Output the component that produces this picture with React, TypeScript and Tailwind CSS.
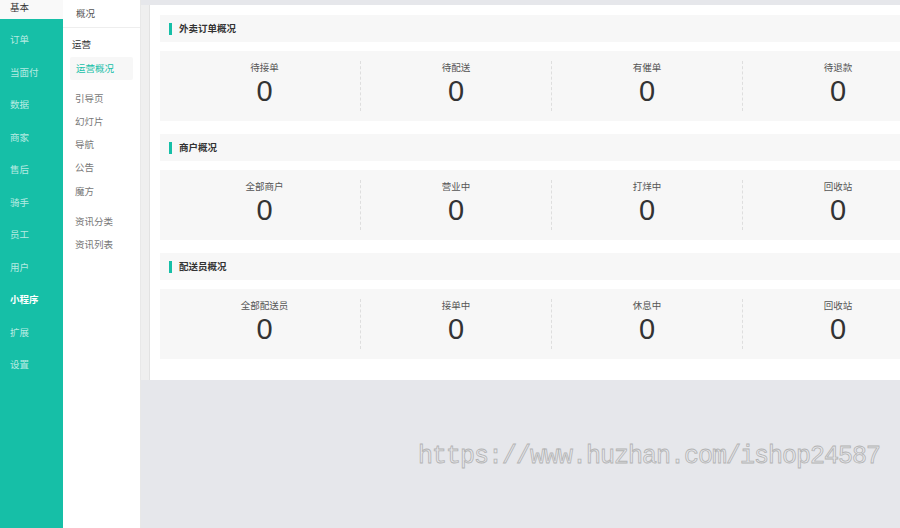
import React from 'react';

const mainMenu = ['订单', '当面付', '数据', '商家', '售后', '骑手', '员工', '用户', '小程序', '扩展', '设置'];
const subMenu = ['引导页', '幻灯片', '导航', '公告', '魔方'];

const sections = [
    { title: '外卖订单概况', stats: ['待接单', '待配送', '有催单', '待退款'] },
    { title: '商户概况', stats: ['全部商户', '营业中', '打烊中', '回收站'] },
    { title: '配送员概况', stats: ['全部配送员', '接单中', '休息中', '回收站'] },
];

const Section: React.FC<{ title: string; stats: string[] }> = ({ title, stats }) => (
    <div className="mb-[13px] last:mb-0">
        <div className="h-[27px] bg-[#f7f7f7] flex items-center pl-[9px]">
            <span className="w-[3px] h-[12px] bg-[#16bfa7] mr-[7px]" />
            <span className="text-[9.5px] font-bold text-[#333]">{title}</span>
        </div>
        <div className="mt-[9px] h-[70px] bg-[#f7f7f7] flex px-[9px]">
            {stats.map((label, i) => (
                <div key={label} className={`w-[191px] shrink-0 my-[10px] flex flex-col items-center ${i > 0 ? 'border-l border-dashed border-[#dedede]' : ''}`}>
                    <span className="text-[9.5px] text-[#555] leading-[12px]">{label}</span>
                    <span className="mt-[2px] text-[29px] text-[#333] leading-[32px] font-['Liberation_Sans',sans-serif]">0</span>
                </div>
            ))}
        </div>
    </div>
);

export default function App() {
    return (
        <div className="relative w-[900px] h-[528px] overflow-hidden flex font-['Noto_Sans_CJK_SC','Noto_Sans',sans-serif]">
            <div className="w-[63px] shrink-0 flex flex-col">
                <div className="h-[19px] bg-[#f9f9f9] text-[9.5px] text-[#333] pl-[10px] leading-[14px]">基本</div>
                <div className="flex-1 bg-[#16bfa7] pt-[4px]">
                    {mainMenu.map(item => (
                        <div key={item} className={`h-[32.5px] flex items-center pl-[10px] text-[9.5px] ${item === '小程序' ? 'text-white font-bold' : 'text-white/70'}`}>
                            {item}
                        </div>
                    ))}
                </div>
            </div>

            <div className="w-[78px] shrink-0 bg-white border-r border-[#e8e8e8]">
                <div className="h-[28px] border-b border-[#eeeeee] flex items-center pl-[13px] text-[9.5px] text-[#555]">概况</div>
                <div className="pl-[9px] pt-[9px] text-[9.5px] text-[#333] leading-[14px]">运营</div>
                <div className="mx-[7px] mt-[6px] h-[23px] bg-[#f7f7f7] rounded-[2px] flex items-center pl-[6px] text-[9.5px] text-[#16bfa7]">运营概况</div>
                <div className="mt-[6px]">
                    {subMenu.map(item => (
                        <div key={item} className="h-[23.3px] flex items-center pl-[12px] text-[9.5px] text-[#777]">{item}</div>
                    ))}
                </div>
                <div className="mt-[7px]">
                    {['资讯分类', '资讯列表'].map(item => (
                        <div key={item} className="h-[23.3px] flex items-center pl-[12px] text-[9.5px] text-[#777]">{item}</div>
                    ))}
                </div>
            </div>

            <div className="flex-1 bg-[#e6e7eb] pt-[5px]">
                <div className="flex">
                    <div className="w-[9px] shrink-0 bg-[#efefef] border-r border-[#e2e2e2]" />
                    <div className="w-[800px] shrink-0 bg-white pt-[10px] pl-[10px] pb-[21px]">
                        {sections.map(s => (
                            <Section key={s.title} title={s.title} stats={s.stats} />
                        ))}
                    </div>
                </div>
            </div>

            <div className="absolute left-[418px] top-[441px] text-[25px] tracking-[-1px] leading-[32px] whitespace-nowrap font-['Liberation_Mono',monospace] text-transparent [-webkit-text-stroke:0.8px_#b3b3b3]">
                https://www.huzhan.com/ishop24587
            </div>
        </div>
    );
}
